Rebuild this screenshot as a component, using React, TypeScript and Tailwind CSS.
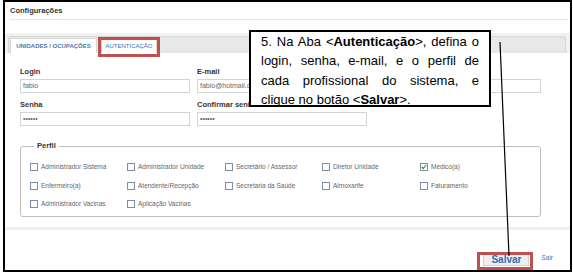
import React from "react";

const col1 = [
  ["Administrador Sistema", "Administrador Unidade", "Secretário / Assessor", "Diretor Unidade", "Médico(a)"],
  ["Enfermeiro(a)", "Atendente/Recepção", "Secretaria da Saúde", "Almoxarife", "Faturamento"],
  ["Administrador Vacinas", "Aplicação Vacinas"],
];

function Check({ label, checked }: { label: string; checked?: boolean }) {
  return (
    <div className="flex items-center h-[10px]">
      <div className="w-[8px] h-[8px] border border-[#7d8fa8] bg-white shrink-0 relative">
        {checked && (
          <svg viewBox="0 0 8 8" className="absolute inset-0 w-[6px] h-[6px]">
            <path d="M1 4 L3 6 L7 1" stroke="#2e9a2e" strokeWidth="1.6" fill="none" />
          </svg>
        )}
      </div>
      <span className="ml-[3px] text-[6.5px] text-[#666] whitespace-nowrap">{label}</span>
    </div>
  );
}

function Field({ label, value }: { label: string; value: string }) {
  return (
    <div className="flex flex-col">
      <div className="h-[10px] leading-[10px] text-[7.5px] font-bold text-[#333] whitespace-nowrap">{label}</div>
      <div className="mt-[2px] h-[14px] border border-[#d4d4d4] bg-white flex items-center px-[2px] text-[7px] text-[#666] overflow-hidden whitespace-nowrap">
        {value}
      </div>
    </div>
  );
}

export default function App() {
  return (
    <div className="w-[573px] h-[274px] bg-white relative overflow-hidden font-['Liberation_Sans',Arial,sans-serif]">
      <div className="ml-[3px] w-[569px] h-[272px] border-2 border-black flex flex-col">
        {/* header */}
        <div className="ml-[5px] mr-[2px] h-[18px] border-b border-[#e6e6e6] flex items-center">
          <span className="text-[7.5px] font-bold text-[#333]">Configurações</span>
        </div>
        {/* tabs band */}
        <div className="mt-[13px] h-[20px] bg-[#f1f1f1] pl-[3px] pr-[4px] pt-[3px]">
          <div className="h-[17px] bg-[#e8e8e8] border border-[#d6d6d6] border-b-0 rounded-t-[3px] flex items-end pl-[1px] gap-[4px]">
            <div className="w-[87px] h-[15px] bg-white border border-[#d6d6d6] border-b-0 rounded-t-[2px] flex items-center justify-center text-[6px] font-bold text-[#4f77a6] whitespace-nowrap">
              UNIDADES / OCUPAÇÕES
            </div>
            <div className="w-[56px] h-[15px] bg-white border border-[#d6d6d6] border-b-0 rounded-t-[2px] flex items-center justify-center text-[6px] text-[#3a6fb0] whitespace-nowrap">
              AUTENTICAÇÃO
            </div>
          </div>
        </div>
        {/* form */}
        <div className="pl-[15px] pt-[14px]">
          <div className="grid grid-cols-[170px_170px_167px] gap-x-[7px] gap-y-[7px]">
            <Field label="Login" value="fabio" />
            <Field label="E-mail" value="fabio@hotmail.com" />
            <Field label="" value="" />
            <Field label="Senha" value="••••••" />
            <Field label="Confirmar senha" value="••••••" />
          </div>
          <fieldset className="mt-[15px] w-[521px] h-[76px] border border-[#bdbdbd] rounded-[3px] pl-[9px] pt-[11px]">
            <legend className="ml-[4px] px-[3px] h-[10px] leading-[10px] text-[7.5px] font-bold text-[#333]">Perfil</legend>
            <div className="flex flex-col gap-y-[8.5px]">
              {col1.map((row, i) => (
                <div key={i} className="grid grid-cols-[97px_98px_97px_98px_1fr]">
                  {row.map((l) => (
                    <Check key={l} label={l} checked={l === "Médico(a)"} />
                  ))}
                </div>
              ))}
            </div>
          </fieldset>
        </div>
        <div className="mt-[10px] h-[3px] bg-[#f0f0f0]" />
        {/* footer */}
        <div className="flex-1 flex items-end justify-end pr-[17px] pb-[4px]">
          <div className="w-[46px] h-[13px] bg-[#eeeeee] border border-[#d2d2d2] flex items-center justify-center text-[10px] font-bold text-[#2f6db5]">
            Salvar
          </div>
          <span className="ml-[12px] mb-[3px] text-[6.5px] text-[#3a78c2]">Sair</span>
        </div>
      </div>

      {/* annotation: red boxes */}
      <div className="absolute left-[98px] top-[37px] w-[62px] h-[20px] border-[3px] border-[#c0504d]" />
      <div className="absolute left-[477px] top-[252px] w-[56px] h-[18px] border-[3px] border-[#c0504d]" />

      {/* annotation: pointer line */}
      <svg className="absolute inset-0 pointer-events-none" width="573" height="274">
        <line x1="500" y1="42" x2="509" y2="256" stroke="#000" strokeWidth="1.2" />
      </svg>

      {/* annotation: callout */}
      <div className="absolute left-[249px] top-[30px] w-[242px] h-[77px] border-2 border-black bg-white px-[10px] text-[13px] leading-[19.4px] text-black">
        <div className="text-justify [text-align-last:justify] whitespace-nowrap">
          5. Na Aba &lt;<b>Autenticação</b>&gt;, defina o
        </div>
        <div className="text-justify [text-align-last:justify]">login, senha, e-mail, e o perfil de</div>
        <div className="text-justify [text-align-last:justify]">cada profissional do sistema, e</div>
        <div>
          clique no botão &lt;<b>Salvar</b>&gt;.
        </div>
      </div>
    </div>
  );
}
